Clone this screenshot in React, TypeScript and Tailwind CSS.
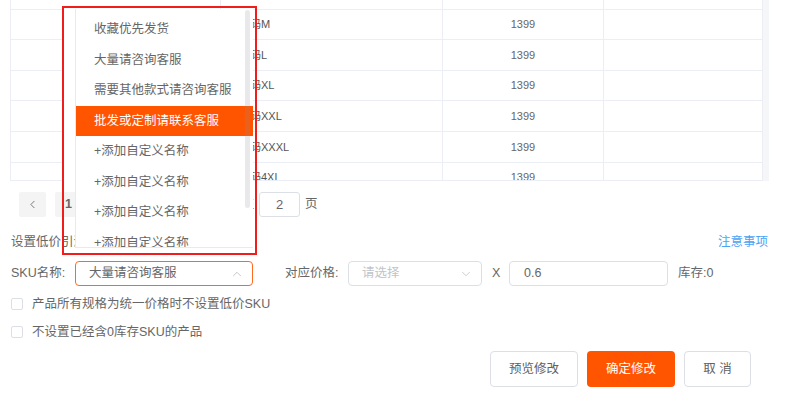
import { ChevronDown, ChevronLeft, ChevronUp } from 'lucide-react';

const sizes = ['尺码S', '尺码M', '尺码L', '尺码XL', '尺码XXL', '尺码XXXL', '尺码4XL'];

const options = [
  '收藏优先发货',
  '大量请咨询客服',
  '需要其他款式请咨询客服',
  '批发或定制请联系客服',
  '+添加自定义名称',
  '+添加自定义名称',
  '+添加自定义名称',
  '+添加自定义名称',
];

function Checkbox({ label }: { label: string }) {
  return (
    <label className="flex h-4 items-center pl-[11px]">
      <span className="size-3 rounded-[2px] border border-[#dcdfe6] bg-white" />
      <span className="ml-[9px] text-[12.5px] text-[#666]">{label}</span>
    </label>
  );
}

export default function App() {
  return (
    <div
      className="relative h-[417px] w-[788px] overflow-hidden bg-white text-[#666]"
      style={{ fontFamily: '"Liberation Sans", "Noto Sans CJK SC", sans-serif' }}
    >
      {/* sku table, scrolled part-way */}
      <div className="ml-[10px] flex h-[181px] w-[759px]">
        <div className="h-full w-[752px] overflow-hidden border-b border-l border-[#ebeef5]">
          <div className="-mt-[21px]">
            {sizes.map((s, i) => (
              <div key={i} className="flex h-[30.6px] border-b border-[#ebeef5] text-[11px]">
                <div className="w-[210px] border-r border-[#ebeef5]" />
                <div className="flex w-[222px] items-center border-r border-[#ebeef5] pl-[18px] text-[#555]">
                  {s}
                </div>
                <div className="flex w-[161px] items-center justify-center border-r border-[#ebeef5]">1399</div>
                <div className="flex-1" />
              </div>
            ))}
          </div>
        </div>
        <div className="h-full w-[7px] border-l border-[#eceef3] bg-[#f5f6f8]" />
      </div>

      {/* pagination */}
      <div className="mt-[11px] flex h-[25px] items-center pl-[19px] text-[12.5px]">
        <button className="flex h-[25px] w-[27px] items-center justify-center rounded-[2px] bg-[#f4f4f5] text-[#666]">
          <ChevronLeft size={13} strokeWidth={1.6} />
        </button>
        <button className="ml-[9px] h-[25px] w-[27px] rounded-[2px] bg-[#f4f4f5] font-bold text-[#666]">1</button>
        <button className="ml-[9px] h-[25px] w-[27px] rounded-[2px] bg-[#f4f4f5] text-[#666]">2</button>
        <span className="ml-[111px]">前往</span>
        <span className="ml-[5px] flex h-[25px] w-[41px] items-center justify-center rounded-[3px] border border-[#dcdfe6] text-[13px] text-[#666]">
          2
        </span>
        <span className="ml-[5px]">页</span>
      </div>

      {/* section title */}
      <div className="mt-[15px] flex h-5 items-center justify-between pl-[11px] pr-[20px] text-[12.5px]">
        <span>设置低价引流SKU:</span>
        <span className="text-[#4ba3f5]">注意事项</span>
      </div>

      {/* sku name row */}
      <div className="mt-[9px] flex h-[25px] items-center text-[12.5px]">
        <span className="w-[75px] pl-[11px]">SKU名称:</span>
        <div className="flex h-[25px] w-[178px] items-center justify-between rounded-[4px] border border-[#ff6a1f] pl-[13px] pr-[8px]">
          <span className="text-[#666]">大量请咨询客服</span>
          <ChevronUp size={14} strokeWidth={1.4} className="text-[#b8bcc4]" />
        </div>
        <span className="ml-[32px] w-[63px]">对应价格:</span>
        <div className="flex h-[25px] w-[134px] items-center justify-between rounded-[4px] border border-[#dcdfe6] pl-[13px] pr-[8px]">
          <span className="text-[#c0c4cc]">请选择</span>
          <ChevronDown size={14} strokeWidth={1.4} className="text-[#c0c4cc]" />
        </div>
        <span className="ml-[10px] w-[17px] text-[#666]">X</span>
        <div className="flex h-[25px] w-[159px] items-center rounded-[4px] border border-[#dcdfe6] pl-[14px] text-[#666]">
          0.6
        </div>
        <span className="ml-[10px]">库存:0</span>
      </div>

      <div className="mt-[10px]">
        <Checkbox label="产品所有规格为统一价格时不设置低价SKU" />
      </div>
      <div className="mt-[12px]">
        <Checkbox label="不设置已经含0库存SKU的产品" />
      </div>

      {/* actions */}
      <div className="mt-[11px] flex justify-end gap-[9px] pr-[37px] text-[12.5px]">
        <button className="h-[36px] w-[88px] rounded-[4px] border border-[#dcdfe6] bg-white text-[#606266]">预览修改</button>
        <button className="h-[36px] w-[88px] rounded-[4px] bg-[#ff5500] text-white">确定修改</button>
        <button className="h-[36px] w-[67px] rounded-[4px] border border-[#dcdfe6] bg-white text-[#606266]">取 消</button>
      </div>

      {/* open dropdown, outlined in red */}
      <div className="absolute left-[64px] top-[8px] h-[173px] w-[11px] bg-white" />
      <div className="absolute left-[75px] top-[9px] h-[239px] w-[178px] overflow-hidden border-b border-l border-[#e8eaef] bg-white pt-[5px]">
        {options.map((o, i) => (
          <div
            key={i}
            className={
              i === 3
                ? 'flex h-[30.6px] items-center bg-[#ff5500] pl-[18px] text-[12.5px] text-white'
                : 'flex h-[30.6px] items-center pl-[18px] text-[12.5px] text-[#666]'
            }
          >
            {o}
          </div>
        ))}
        <div className="absolute right-[3px] top-[1px] h-[198px] w-[5px] rounded-full bg-[#909399]/20" />
      </div>
      <div className="absolute left-[62px] top-[6px] h-[249px] w-[195px] border-2 border-[#f21c1c]" />
    </div>
  );
}
